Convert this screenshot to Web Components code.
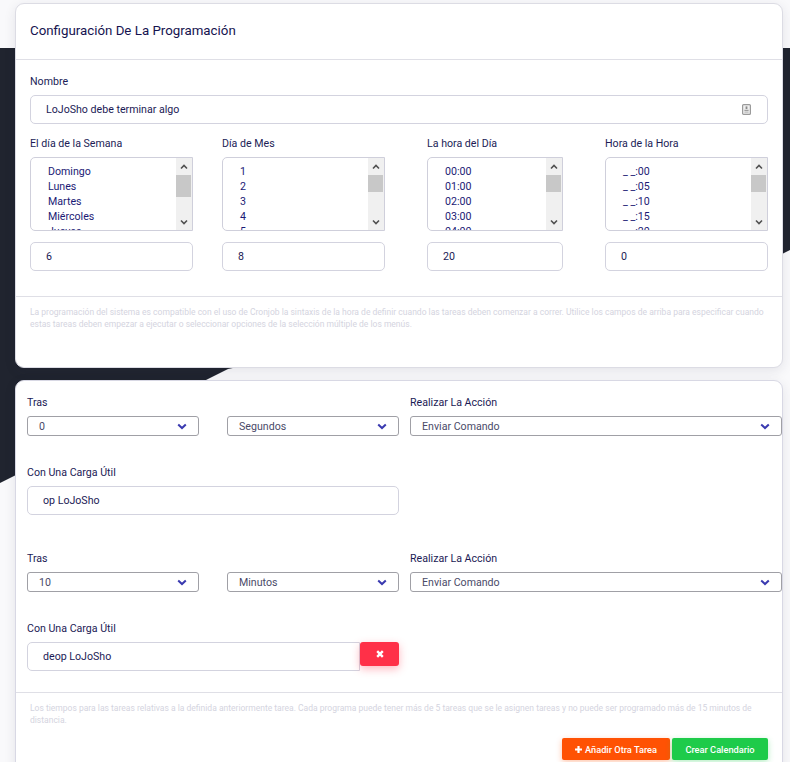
<!DOCTYPE html>
<html lang="es">
<head>
<meta charset="utf-8">
<title>Configuración De La Programación</title>
<style>
  html, body { margin: 0; height: 762px; overflow: hidden; }
  body { font-family: Roboto, "Liberation Sans", sans-serif; color: #1b1a55; background: #f9f9fb; }
</style>
</head>
<body>
<schedule-page>
  <schedule-card title-text="Configuración De La Programación">
    <field-label>Nombre</field-label>
    <text-box icon>LoJoSho debe terminar algo</text-box>
    <cron-columns>
      <cron-column style="width:163px" thumb="22" label="El día de la Semana" value="6" items="Domingo|Lunes|Martes|Miércoles|Jueves"></cron-column>
      <cron-column style="width:163px;margin-left:29px" thumb="17" label="Día de Mes" value="8" items="1|2|3|4|5"></cron-column>
      <cron-column style="width:136px;margin-left:42px" thumb="17" label="La hora del Día" value="20" items="00:00|01:00|02:00|03:00|04:00"></cron-column>
      <cron-column style="width:163px;margin-left:42px" thumb="17" label="Hora de la Hora" value="0" items="_ _:00|_ _:05|_ _:10|_ _:15|_ _:20"></cron-column>
    </cron-columns>
    <help-note slot="note">La programación del sistema es compatible con el uso de Cronjob la sintaxis de la hora de definir cuando las tareas deben comenzar a correr. Utilice los campos de arriba para especificar cuando estas tareas deben empezar a ejecutar o seleccionar opciones de la selección múltiple de los menús.</help-note>
  </schedule-card>
  <task-card>
    <task-row amount="0" unit="Segundos" payload="op LoJoSho"></task-row>
    <task-row amount="10" unit="Minutos" payload="deop LoJoSho" removable></task-row>
    <help-note slot="note">Los tiempos para las tareas relativas a la definida anteriormente tarea. Cada programa puede tener más de 5 tareas que se le asignen tareas y no puede ser programado más de 15 minutos de distancia.</help-note>
    <action-button slot="actions" color="#ff5204" width="108" plus>Añadir Otra Tarea</action-button>
    <action-button slot="actions" color="#1ecb4a" width="96">Crear Calendario</action-button>
  </task-card>
</schedule-page>

<script>
function define(name, css, html, setup) {
  customElements.define(name, class extends HTMLElement {
    constructor() {
      super();
      this.attachShadow({ mode: "open" });
      this.shadowRoot.innerHTML = `<style>${css}</style>${typeof html === "function" ? html(this) : html}`;
    }
    connectedCallback() {
      if (setup) setup(this);
    }
  });
}

define("schedule-page", `
  :host { display: block; position: relative; height: 762px; padding: 3px 7px 0 15px; box-sizing: border-box; }
  svg { position: absolute; left: 0; top: 0; }
  .stack { position: relative; display: flex; flex-direction: column; gap: 12px; }
`, `
  <svg width="790" height="762"><polygon fill="#20242f" points="0,48 790,48 790,250 783,253.5 228,369 0,483"/></svg>
  <div class="stack"><slot></slot></div>
`);

define("schedule-card", `
  :host { display: block; height: 365px; box-sizing: border-box; background: #fff; border: 1px solid #dcdce4; border-radius: 9px; box-shadow: 0 3px 12px rgba(40,40,70,.1); }
  header { height: 56px; box-sizing: border-box; padding: 19px 14px 0; font-size: 13.3px; line-height: 16px; border-bottom: 1px solid #dfdfe6; color: #15134f; }
  .body { padding: 15px 14px 0; }
  .foot { margin-top: 25px; border-top: 1px solid #dfdfe6; padding: 9px 14px 0; }
`, el => `
  <header>${el.getAttribute("title-text")}</header>
  <div class="body"><slot></slot></div>
  <div class="foot"><slot name="note"></slot></div>
`);

define("task-card", `
  :host { display: block; height: 400px; box-sizing: border-box; background: #fff; border: 1px solid #d8d8e4; border-radius: 9px; box-shadow: 0 3px 12px rgba(40,40,70,.1); }
  .rows { padding: 15px 0 0 11px; display: flex; flex-direction: column; gap: 29px; }
  .foot { margin-top: 13px; border-top: 1px solid #dfdfe6; padding: 9px 14px 0; }
  .actions { display: flex; justify-content: flex-end; gap: 2px; margin-top: 12px; }
`, `
  <div class="rows"><slot></slot></div>
  <div class="foot">
    <slot name="note"></slot>
    <div class="actions"><slot name="actions"></slot></div>
  </div>
`);

define("field-label", `
  :host { display: block; font-size: 10.64px; line-height: 14px; margin-bottom: 6px; color: #211c56; }
`, `<slot></slot>`);

define("text-box", `
  :host { display: flex; align-items: center; height: 29px; box-sizing: border-box; padding: 0 15px; background: #fff; border: 1px solid #d3d3df; border-radius: 5px; font-size: 10.64px; color: #1b1a55; }
  :host([joined]) { border-radius: 5px 0 0 5px; }
  span { flex: 1; }
  svg { display: block; margin-right: 1px; }
`, el => `<span><slot></slot></span>${el.hasAttribute("icon") ? `
  <svg width="9" height="11" viewBox="0 0 9 11"><rect x=".6" y=".6" width="7.8" height="9.8" rx="1" fill="#efefef" stroke="#9a9a9a" stroke-width="1.2"/><rect x="3.6" y="2.4" width="1.8" height="2.6" fill="#8a8a8a"/><rect x="2.4" y="5.8" width="4.2" height="1" fill="#8a8a8a"/><rect x="2.4" y="7.6" width="4.2" height="1" fill="#b0b0b0"/></svg>` : ""}`);

define("cron-columns", `
  :host { display: flex; margin-top: 13px; }
`, `<slot></slot>`);

define("cron-column", `
  :host { display: block; flex: none; }
  .label { font-size: 10.64px; line-height: 14px; color: #211c56; margin-bottom: 6px; }
  .box { position: relative; height: 74px; box-sizing: border-box; overflow: hidden; background: #fff; border: 1px solid #cfcfdb; border-radius: 5px 0 0 5px; }
  ul { list-style: none; margin: 0; padding: 6px 0 0 17px; font-size: 10.64px; line-height: 15px; color: #1b1a75; }
  .bar { position: absolute; right: 0; top: 0; bottom: 0; width: 16px; background: #f0f0f0; display: flex; flex-direction: column; }
  .bar svg { display: block; margin: 6px auto 0; }
  .thumb { margin: 5px 1px 0 0; background: #c8c8c8; }
  .bar .down { margin-top: auto; margin-bottom: 5px; }
  .value { display: flex; align-items: center; height: 29px; box-sizing: border-box; margin-top: 11px; padding: 0 15px; border: 1px solid #d3d3df; border-radius: 5px; font-size: 10.64px; color: #1b1a55; }
`, el => `
  <div class="label">${el.getAttribute("label")}</div>
  <div class="box">
    <ul>${el.getAttribute("items").split("|").map(i => `<li>${i}</li>`).join("")}</ul>
    <div class="bar">
      <svg width="8" height="6" viewBox="0 0 8 6"><path d="M1 4.5 4 1.5l3 3" fill="none" stroke="#505050" stroke-width="1.6"/></svg>
      <div class="thumb" style="height:${el.getAttribute("thumb")}px"></div>
      <svg class="down" width="8" height="6" viewBox="0 0 8 6"><path d="M1 1.5 4 4.5l3-3" fill="none" stroke="#505050" stroke-width="1.6"/></svg>
    </div>
  </div>
  <div class="value">${el.getAttribute("value")}</div>
`);

define("help-note", `
  :host { display: block; font-size: 8.52px; line-height: 12px; color: #d4d4e0; }
`, `<slot></slot>`);

define("drop-down", `
  :host { display: flex; align-items: center; height: 20px; box-sizing: border-box; padding: 0 11px; border: 1px solid #a0a0a6; border-radius: 3px; background: #fff; font-size: 10.64px; color: #4a4a68; flex: none; }
  span { flex: 1; }
  svg { display: block; }
`, `<span><slot></slot></span><svg width="10" height="7" viewBox="0 0 10 7"><path d="M1.2 1.4 5 5l3.8-3.6" fill="none" stroke="#3a3ab0" stroke-width="2"/></svg>`);

define("task-row", `
  :host { display: block; height: 127px; }
  .labels, .selects { display: flex; }
  .labels { font-size: 10.64px; line-height: 14px; color: #1b1a55; margin-bottom: 6px; }
  .payload-label { font-size: 10.64px; line-height: 14px; color: #1b1a55; margin: 30px 0 6px; }
  .payload { display: flex; align-items: flex-start; width: 372px; }
  text-box { flex: 1; }
  button { flex: none; width: 39px; height: 24px; padding: 0; border: 0; border-radius: 3px; background: #ff3048; box-shadow: 0 3px 8px rgba(255,48,72,.35); display: flex; align-items: center; justify-content: center; }
`, el => `
  <div class="labels"><span style="width:383px">Tras</span><span>Realizar La Acción</span></div>
  <div class="selects">
    <drop-down style="width:172px">${el.getAttribute("amount")}</drop-down>
    <drop-down style="width:172px;margin-left:28px">${el.getAttribute("unit")}</drop-down>
    <drop-down style="width:372px;margin-left:11px">Enviar Comando</drop-down>
  </div>
  <div class="payload-label">Con Una Carga Útil</div>
  <div class="payload">
    <text-box ${el.hasAttribute("removable") ? "joined" : ""}>${el.getAttribute("payload")}</text-box>
    ${el.hasAttribute("removable") ? `<button aria-label="Eliminar"><svg width="8" height="8" viewBox="0 0 8 8"><path d="M1.2 1.2l5.6 5.6M6.8 1.2 1.2 6.8" stroke="#fff" stroke-width="2.4"/></svg></button>` : ""}
  </div>
`);

define("action-button", `
  :host { display: flex; align-items: center; justify-content: center; gap: 3px; height: 22px; box-sizing: border-box; border-radius: 2px; color: #fff; font-size: 9.24px; font-weight: 500; flex: none; }
`, el => `${el.hasAttribute("plus") ? `<svg width="7" height="7" viewBox="0 0 7 7"><path d="M3.5 0v7M0 3.5h7" stroke="#fff" stroke-width="2.2"/></svg>` : ""}<slot></slot>`, el => {
  el.style.background = el.getAttribute("color");
  el.style.width = el.getAttribute("width") + "px";
  el.style.boxShadow = `0 2px 6px ${el.getAttribute("color")}55`;
});
</script>
</body>
</html>
